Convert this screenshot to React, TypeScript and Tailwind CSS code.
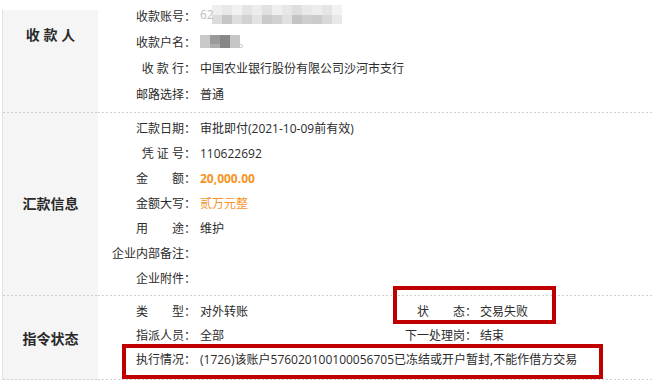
import React from "react";

const dots =
  "h-px bg-[linear-gradient(90deg,#d0d0d0_2px,transparent_2px)] bg-[length:4px_1px] bg-repeat-x";

function Separator() {
  return (
    <div className="flex h-px">
      <div className="ml-[2px] w-[96px] h-px border-l border-[#e2e2e2] bg-[#f5f5f5]">
        <div className={dots} />
      </div>
      <div className={"flex-1 " + dots} />
    </div>
  );
}

function Field({
  label,
  children,
  h = "h-[25px]",
}: {
  label: string;
  children?: React.ReactNode;
  h?: string;
}) {
  return (
    <div className={"flex items-center " + h}>
      <div className="w-[98px] shrink-0 text-right whitespace-pre">{label}</div>
      <div className="pl-[4px] whitespace-nowrap">{children}</div>
    </div>
  );
}

function SideCell({
  title,
  className = "",
}: {
  title: string;
  className?: string;
}) {
  return (
    <div
      className={
        "ml-[2px] w-[96px] shrink-0 border-l border-[#e2e2e2] bg-[#f5f5f5] flex justify-center text-[14px] font-bold text-[#2a2a2a] leading-[20px] whitespace-pre " +
        className
      }
    >
      {title}
    </div>
  );
}

function AccountMosaic() {
  const top = ["#efefef", "#e8e8e8", "#f1f1f1", "#e4e4e4", "#ececec", "#e1e1e1", "#efefef", "#e7e7e7", "#dedede", "#e9e9e9", "#ededed", "#e5e5e5", "#f2f2f2"];
  const bot = ["#dcdcdc", "#c6c6c6", "#dedede", "#d2d2d2", "#e3e3e3", "#cacaca", "#d1d1d1", "#e0e0e0", "#c4c4c4", "#cecece", "#cbcbcb", "#d9d9d9", "#e8e8e8"];
  return (
    <span className="relative inline-flex items-center h-[20px]">
      <svg width="142" height="20" viewBox="0 0 142 20" className="block">
        {top.map((c, i) => (
          <rect key={"t" + i} x={12 + i * 10} y={0} width={10} height={10} fill={c} />
        ))}
        {bot.map((c, i) => (
          <rect key={"b" + i} x={12 + i * 10} y={10} width={10} height={9} fill={c} />
        ))}
      </svg>
      <span className="absolute left-0 top-0 leading-[20px] text-[#bdbdbd]">62</span>
    </span>
  );
}

function NameMosaic() {
  return (
    <span className="inline-flex items-center h-[20px]">
      <svg width="44" height="16" viewBox="0 0 44 16" className="block">
        <rect x="0" y="1" width="10" height="13" fill="#c9c9c9" />
        <rect x="10" y="1" width="10" height="13" fill="#9a9a9a" />
        <rect x="20" y="1" width="10" height="13" fill="#878787" />
        <rect x="30" y="1" width="10" height="13" fill="#c6c6c6" />
        <rect x="10" y="10" width="10" height="4" fill="#adadad" />
        <circle cx="41" cy="12" r="1.6" fill="none" stroke="#c0c0c0" strokeWidth="0.8" />
      </svg>
    </span>
  );
}

export default function App() {
  return (
    <div className="relative w-[653px] h-[385px] overflow-hidden bg-white text-[12px] text-[#2b2b2b] font-['Open_Sans','Noto_Sans_CJK_SC',sans-serif]">
      {/* Section 1 */}
      <div className="flex h-[112px]">
        <SideCell title="收 款 人" className="mt-[10px] pt-[15px]" />
        <div className="flex-1 pt-[4px]">
          <Field label="收款账号：" h="h-[26px]">
            <AccountMosaic />
          </Field>
          <Field label="收款户名：" h="h-[26px]">
            <NameMosaic />
          </Field>
          <Field label="收 款 行：" h="h-[26px]">
            中国农业银行股份有限公司沙河市支行
          </Field>
          <Field label="邮路选择：" h="h-[26px]">
            普通
          </Field>
        </div>
      </div>
      <Separator />

      {/* Section 2 */}
      <div className="flex h-[182px]">
        <SideCell title="汇款信息" className="items-center" />
        <div className="flex-1 pt-[3px]">
          <Field label="汇款日期：">审批即付(2021-10-09前有效)</Field>
          <Field label="凭 证 号：">110622692</Field>
          <Field label="金　　额：">
            <span className="font-bold text-[#f7931e]">20,000.00</span>
          </Field>
          <Field label="金额大写：">
            <span className="text-[#f7931e]">贰万元整</span>
          </Field>
          <Field label="用　　途：">维护</Field>
          <Field label="企业内部备注：" />
          <Field label="企业附件：" />
        </div>
      </div>
      <Separator />

      {/* Section 3 */}
      <div className="flex h-[83px]">
        <SideCell title="指令状态" className="items-center pt-[2px]" />
        <div className="flex-1 pt-[4px]">
          <div className="flex">
            <div className="w-[282px]">
              <Field label="类　　型：" h="h-[24px]">
                对外转账
              </Field>
            </div>
            <div className="flex items-center h-[24px]">
              <div className="w-[97px] text-right whitespace-pre">状　　态：</div>
              <div className="pl-[3px]">交易失败</div>
            </div>
          </div>
          <div className="flex">
            <div className="w-[282px]">
              <Field label="指派人员：" h="h-[24px]">
                全部
              </Field>
            </div>
            <div className="flex items-center h-[24px]">
              <div className="w-[97px] text-right whitespace-pre">下一处理岗：</div>
              <div className="pl-[3px]">结束</div>
            </div>
          </div>
          <Field label="执行情况：" h="h-[24px]">
            (1726)该账户576020100100056705已冻结或开户暂封,不能作借方交易
          </Field>
        </div>
      </div>
      <Separator />

      {/* Red annotation boxes */}
      <div className="absolute left-[393px] top-[286px] w-[163px] h-[38px] border-[4px] border-[#c00000]" />
      <div className="absolute left-[122px] top-[344px] w-[481px] h-[35px] border-[4px] border-[#c00000]" />
    </div>
  );
}
